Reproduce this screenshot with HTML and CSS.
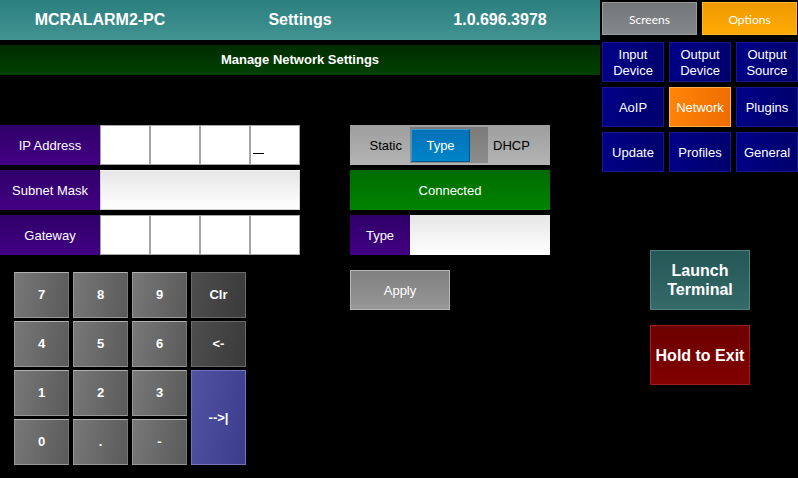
FILE: index.html
```html
<!DOCTYPE html>
<html lang="en">
<head>
<meta charset="utf-8">
<meta name="viewport" content="width=device-width, initial-scale=1">
<title>Settings</title>
<link rel="stylesheet" href="styles.css">
</head>
<body>
<div class="app">
  <main class="main">
    <header class="topbar">
      <span>MCRALARM2-PC</span>
      <h1>Settings</h1>
      <span>1.0.696.3978</span>
    </header>
    <h2 class="subtitle">Manage Network Settings</h2>
    <div class="panels">
      <section class="addresses">
        <div class="rows">
          <div class="row">
            <label class="name" for="ip1">IP Address</label>
            <div class="octets">
              <input id="ip1" type="text" aria-label="IP Address part 1">
              <input type="text" aria-label="IP Address part 2">
              <input type="text" aria-label="IP Address part 3">
              <input type="text" aria-label="IP Address part 4" class="active">
            </div>
          </div>
          <div class="row">
            <label class="name" for="mask">Subnet Mask</label>
            <input id="mask" class="field outlined" type="text">
          </div>
          <div class="row">
            <label class="name" for="gw1">Gateway</label>
            <div class="octets">
              <input id="gw1" type="text" aria-label="Gateway part 1">
              <input type="text" aria-label="Gateway part 2">
              <input type="text" aria-label="Gateway part 3">
              <input type="text" aria-label="Gateway part 4">
            </div>
          </div>
        </div>
        <div class="keypad">
          <button class="key">7</button>
          <button class="key">8</button>
          <button class="key">9</button>
          <button class="key dark">Clr</button>
          <button class="key">4</button>
          <button class="key">5</button>
          <button class="key">6</button>
          <button class="key dark">&lt;-</button>
          <button class="key">1</button>
          <button class="key">2</button>
          <button class="key">3</button>
          <button class="key next">--&gt;|</button>
          <button class="key">0</button>
          <button class="key">.</button>
          <button class="key">-</button>
        </div>
      </section>
      <section class="connection">
        <div class="rows">
          <div class="mode">
            <span>Static</span>
            <button class="track" role="switch" aria-checked="false"><span class="knob">Type</span></button>
            <span>DHCP</span>
          </div>
          <div class="status" role="status">Connected</div>
          <div class="row short">
            <label class="name" for="type">Type</label>
            <input id="type" class="field" type="text">
          </div>
        </div>
        <button class="apply">Apply</button>
      </section>
    </div>
  </main>
  <aside class="side">
    <nav class="tabs">
      <button class="tab">Screens</button>
      <button class="tab current">Options</button>
    </nav>
    <nav class="options">
      <button class="option">Input Device</button>
      <button class="option">Output Device</button>
      <button class="option">Output Source</button>
      <button class="option">AoIP</button>
      <button class="option current">Network</button>
      <button class="option">Plugins</button>
      <button class="option">Update</button>
      <button class="option">Profiles</button>
      <button class="option">General</button>
    </nav>
    <div class="actions">
      <button class="action launch">Launch Terminal</button>
      <button class="action exit">Hold to Exit</button>
    </div>
  </aside>
</div>
</body>
</html>
```

FILE: styles.css
```css
* {
  box-sizing: border-box;
}

body {
  margin: 0;
  background: #000;
  color: #fff;
  font: 13px/16px "Liberation Sans", Arial, sans-serif;
}

button,
input {
  margin: 0;
  padding: 0;
  border: 0;
  border-radius: 0;
  font: inherit;
  color: inherit;
}

.app {
  display: grid;
  grid-template-columns: 1fr 198px;
}

.topbar {
  display: grid;
  grid-template-columns: repeat(3, 1fr);
  align-items: center;
  height: 40px;
  background: linear-gradient(#2b7f7f, #429492);
  font-size: 16px;
  font-weight: bold;
  text-align: center;
}

.topbar h1 {
  margin: 0;
  font-size: 16px;
}

.subtitle {
  margin: 5px 0 0;
  background: linear-gradient(#002c00, #004000);
  font-size: 13px;
  line-height: 30px;
  text-align: center;
}

.panels {
  display: grid;
  grid-template-columns: 3fr 2fr;
  gap: 50px;
  margin-top: 50px;
  padding-right: 50px;
}

.rows {
  display: grid;
  gap: 5px;
}

.row {
  display: grid;
  grid-template-columns: 100px 1fr;
  height: 40px;
}

.row.short {
  grid-template-columns: 60px 1fr;
}

.name {
  display: grid;
  place-items: center;
  padding-top: 1px;
  background: linear-gradient(#2e0068, #430084);
}

.octets {
  display: grid;
  grid-template-columns: repeat(4, 1fr);
}

.octets input {
  width: 100%;
  border: 1px solid #a6a6a6;
  background: #fff;
  color: #000;
}

.octets .active {
  background: linear-gradient(#000, #000) 2px 27px / 11px 1px no-repeat #fff;
}

.field {
  width: 100%;
  padding: 0 4px;
  background: linear-gradient(#e6e6e6, #fff);
  color: #000;
}

.outlined {
  border: 1px solid #d0d0d0;
  border-top-color: #f4f4f4;
}

.mode {
  display: grid;
  grid-template-columns: 60px 78px 1fr;
  align-items: center;
  height: 40px;
  background: linear-gradient(#9e9e9e, #b4b4b4);
  color: #000;
}

.mode > span:first-child {
  padding: 1px 8px 0 0;
  text-align: right;
}

.mode > span:last-child {
  padding: 1px 0 0 5px;
}

.track {
  height: 36px;
  padding: 1px;
  background: linear-gradient(#7b7b7b, #8d8d8d);
  color: #fff;
}

.knob {
  display: grid;
  place-items: center;
  width: 59px;
  height: 33px;
  padding-top: 1px;
  border: 1px solid #00588f;
  border-top-color: #3a9bd4;
  border-left-color: #3a9bd4;
  background: linear-gradient(#0072b8, #0084c8);
}

.status {
  display: grid;
  place-items: center;
  height: 40px;
  padding-top: 1px;
  background: linear-gradient(#006b00, #008400);
}

.apply {
  width: 100px;
  height: 40px;
  margin-top: 15px;
  padding-top: 1px;
  border: 1px solid #b8b8b8;
  background: linear-gradient(#808080, #979797);
}

.keypad {
  display: grid;
  grid-template-columns: repeat(4, 55px);
  grid-auto-rows: 46px;
  gap: 3px 4px;
  margin: 17px 0 0 14px;
}

.key {
  border: 1px solid #979797;
  border-top-color: #b2b2b2;
  border-right-color: #777;
  background: linear-gradient(100deg, #787878, #5a5a5a);
  font-weight: bold;
}

.dark {
  border-color: #6a6a6a;
  background: linear-gradient(100deg, #4e4e4e, #3a3a3a);
}

.next {
  grid-row: span 2;
  border-color: #7474b8;
  background: linear-gradient(100deg, #5252a2, #3c3c8c);
}

.tabs {
  display: grid;
  grid-template-columns: 1fr 1fr;
  gap: 5px;
  padding: 2px 1px 0 2px;
}

.tab {
  height: 33px;
  padding-top: 2px;
  border: 1px solid #989b9e;
  background: linear-gradient(#737679, #85888b);
  font: 12px/16px Lato, "Open Sans", sans-serif;
}

.tab.current {
  border-color: #ffb833;
  background: linear-gradient(#ee9a00, #ffaa05);
}

.options {
  display: grid;
  grid-template-columns: repeat(3, 1fr);
  grid-auto-rows: 40px;
  gap: 5px;
  margin-top: 7px;
  padding-left: 2px;
}

.option {
  padding: 1px 4px 0;
  border: 1px solid #18188e;
  background: linear-gradient(100deg, #000088, #00006c);
}

.option.current {
  border-color: #ffb04a;
  background: linear-gradient(100deg, #ff8508, #ee6c00);
}

.actions {
  display: grid;
  justify-content: center;
  gap: 15px;
  grid-template-columns: 100px;
  grid-auto-rows: 60px;
  margin-top: 78px;
  padding-left: 2px;
}

.action {
  font-size: 16px;
  font-weight: bold;
  line-height: 19px;
}

.launch {
  border: 1px solid #4f8583;
  background: linear-gradient(#245756, #356a69);
}

.exit {
  border: 1px solid #9c2020;
  background: linear-gradient(#6c0000, #820000);
}
```
